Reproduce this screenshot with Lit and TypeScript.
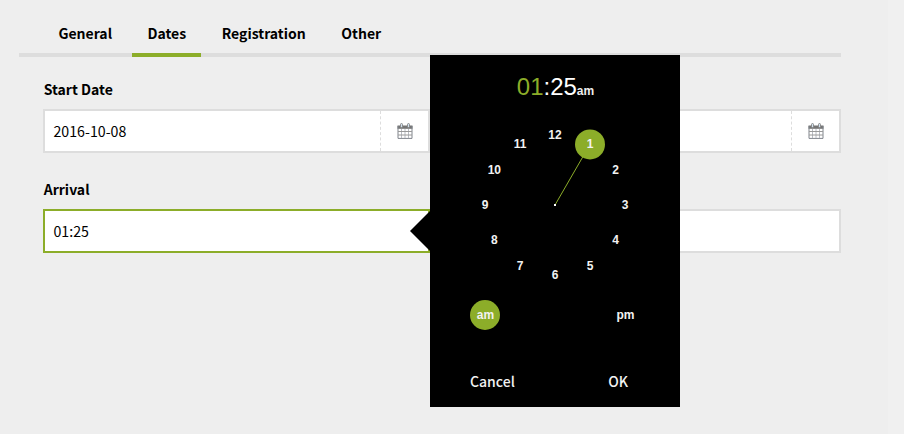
import { LitElement, html, css, svg } from "lit";
import { customElement, property } from "lit/decorators.js";
import { classMap } from "lit/directives/class-map.js";

const calendarIcon = html`<svg width="16" height="16" viewBox="0 0 16 16" aria-hidden="true">
  <rect x="0.5" y="2.5" width="15" height="3.3" fill="#757575" />
  <g fill="none">
    <path d="M1 3V15.4H15V3" stroke="#80858c" />
    <path d="M4.5 6V15M8 6V15M11.5 6V15" stroke="#b9bcc4" />
    <path d="M1 8.5H15M1 12H15" stroke="#9a9a9a" />
    <rect x="3.5" y="0.5" width="2" height="4" rx="1" fill="#d3e3f0" stroke="#8a8a8a" />
    <rect x="10.5" y="0.5" width="2" height="4" rx="1" fill="#d3e3f0" stroke="#8a8a8a" />
  </g>
</svg>`;

@customElement("form-field")
export class FormField extends LitElement {
  @property() label = "";
  @property() value = "";
  @property({ type: Boolean }) picker = false;
  @property({ type: Boolean }) focused = false;

  static styles = css`
    :host { display: block; }
    .label { height: 24px; line-height: 24px; margin-bottom: 8px; padding-left: 0.7px; font-weight: 600; font-size: 14px; }
    .box { display: flex; box-sizing: border-box; height: 44px; border: 2px solid #ddd; background: #fff; }
    .focused { border-color: #8cad29; }
    .value { flex: 1; padding-left: 8.5px; line-height: 41px; font-size: 14.2px; }
    .button { display: flex; box-sizing: border-box; width: 48px; border-left: 1px dashed #ddd; align-items: center; justify-content: center; }
    .button svg { display: block; }
  `;

  render() {
    return html`<div class="label">${this.label}</div>
      <div class=${classMap({ box: true, focused: this.focused })}>
        <div class="value">${this.value}</div>
        ${this.picker ? html`<div class="button">${calendarIcon}</div>` : null}
      </div>`;
  }
}

@customElement("time-picker")
export class TimePicker extends LitElement {
  @property({ type: Number }) hour = 1;

  static styles = css`
    :host { display: flex; flex-direction: column; box-sizing: border-box; width: 250px; height: 352px; background: #000; color: #f2f2f2; }
    .time { height: 65px; padding-left: 1px; text-align: center; font: 24px/63px "Liberation Sans", Arial, sans-serif; color: #fff; }
    .hour { color: #8cad29; }
    .suffix { font-size: 12px; font-weight: 700; color: #eee; }
    .dial { display: block; font: 700 12px "Liberation Sans", Arial, sans-serif; }
    .periods { display: flex; justify-content: space-between; padding: 10px 39.5px 0 40px; font: 700 12px/30px "Liberation Sans", Arial, sans-serif; }
    .period { box-sizing: border-box; width: 30px; height: 30px; border-radius: 50%; text-align: center; }
    .chosen { background: #8cad29; padding-left: 1px; }
    .actions { display: flex; justify-content: space-between; padding: 39px 52px 0 40px; font-size: 14px; line-height: 24px; font-weight: 500; }
    .arrow { position: absolute; left: -20px; top: 156px; border: 20px solid transparent; border-left: 0; border-right-color: #000; }
  `;

  point(hour: number) {
    const angle = (hour * Math.PI) / 6;
    return { x: 125 + 70 * Math.sin(angle), y: 85 - 70 * Math.cos(angle) };
  }

  render() {
    const end = this.point(this.hour);
    const hours = Array.from({ length: 12 }, (_, i) => i + 1);
    return html`<div class="arrow"></div>
      <div class="time"><span class="hour">01</span>:25<span class="suffix">am</span></div>
      <svg class="dial" width="250" height="170">
        <line x1="125" y1="85" x2=${end.x} y2=${end.y} stroke="#8cad29" />
        <circle cx=${end.x} cy=${end.y} r="15" fill="#8cad29" />
        <rect x="124" y="84" width="2" height="2" fill="#fff" />
        ${hours.map((h) => {
          const p = this.point(h);
          return svg`<text x=${p.x} y=${Math.round(p.y + 4)} text-anchor="middle" fill="#f2f2f2">${h}</text>`;
        })}
      </svg>
      <div class="periods"><div class="period chosen">am</div><div class="period">pm</div></div>
      <div class="actions"><span>Cancel</span><span>OK</span></div>`;
  }
}

@customElement("app-root")
export class AppRoot extends LitElement {
  static styles = css`
    :host { display: flex; position: relative; box-sizing: border-box; width: 904px; height: 434px; background: #f0f0f0; color: #000; font-family: "Noto Sans CJK SC", "Noto Sans", sans-serif; overflow: hidden; }
    .page { box-sizing: border-box; width: 888px; padding: 13px 47px 0 19px; background: #eee; }
    .tabs { display: flex; box-sizing: border-box; width: 822px; height: 44px; padding-left: 24px; gap: 5px; border-bottom: 4px solid #ddd; }
    .tab { box-sizing: border-box; height: 44px; padding-left: 0.5px; text-align: center; line-height: 40px; font-size: 14px; font-weight: 600; border-bottom: 4px solid transparent; }
    .general { width: 84px; }
    .dates { width: 69px; }
    .registration { width: 115px; }
    .other { width: 70px; }
    .active { border-color: #8cad29; }
    .form { display: grid; grid-template-columns: 387px 387px; column-gap: 24px; row-gap: 24px; padding: 20px 0 0 24px; }
    .picker { position: absolute; left: 430px; top: 55px; }
  `;

  render() {
    return html`<main class="page">
        <nav class="tabs">
          ${["General", "Dates", "Registration", "Other"].map(
            (name) => html`<div class=${classMap({ tab: true, [name.toLowerCase()]: true, active: name === "Dates" })}>${name}</div>`,
          )}
        </nav>
        <section class="form">
          <form-field label="Start Date" value="2016-10-08" picker></form-field>
          <form-field label=${"\u00a0"} picker></form-field>
          <form-field label="Arrival" value="01:25" focused></form-field>
          <form-field label=${"\u00a0"}></form-field>
        </section>
      </main>
      <time-picker class="picker"></time-picker>`;
  }
}
